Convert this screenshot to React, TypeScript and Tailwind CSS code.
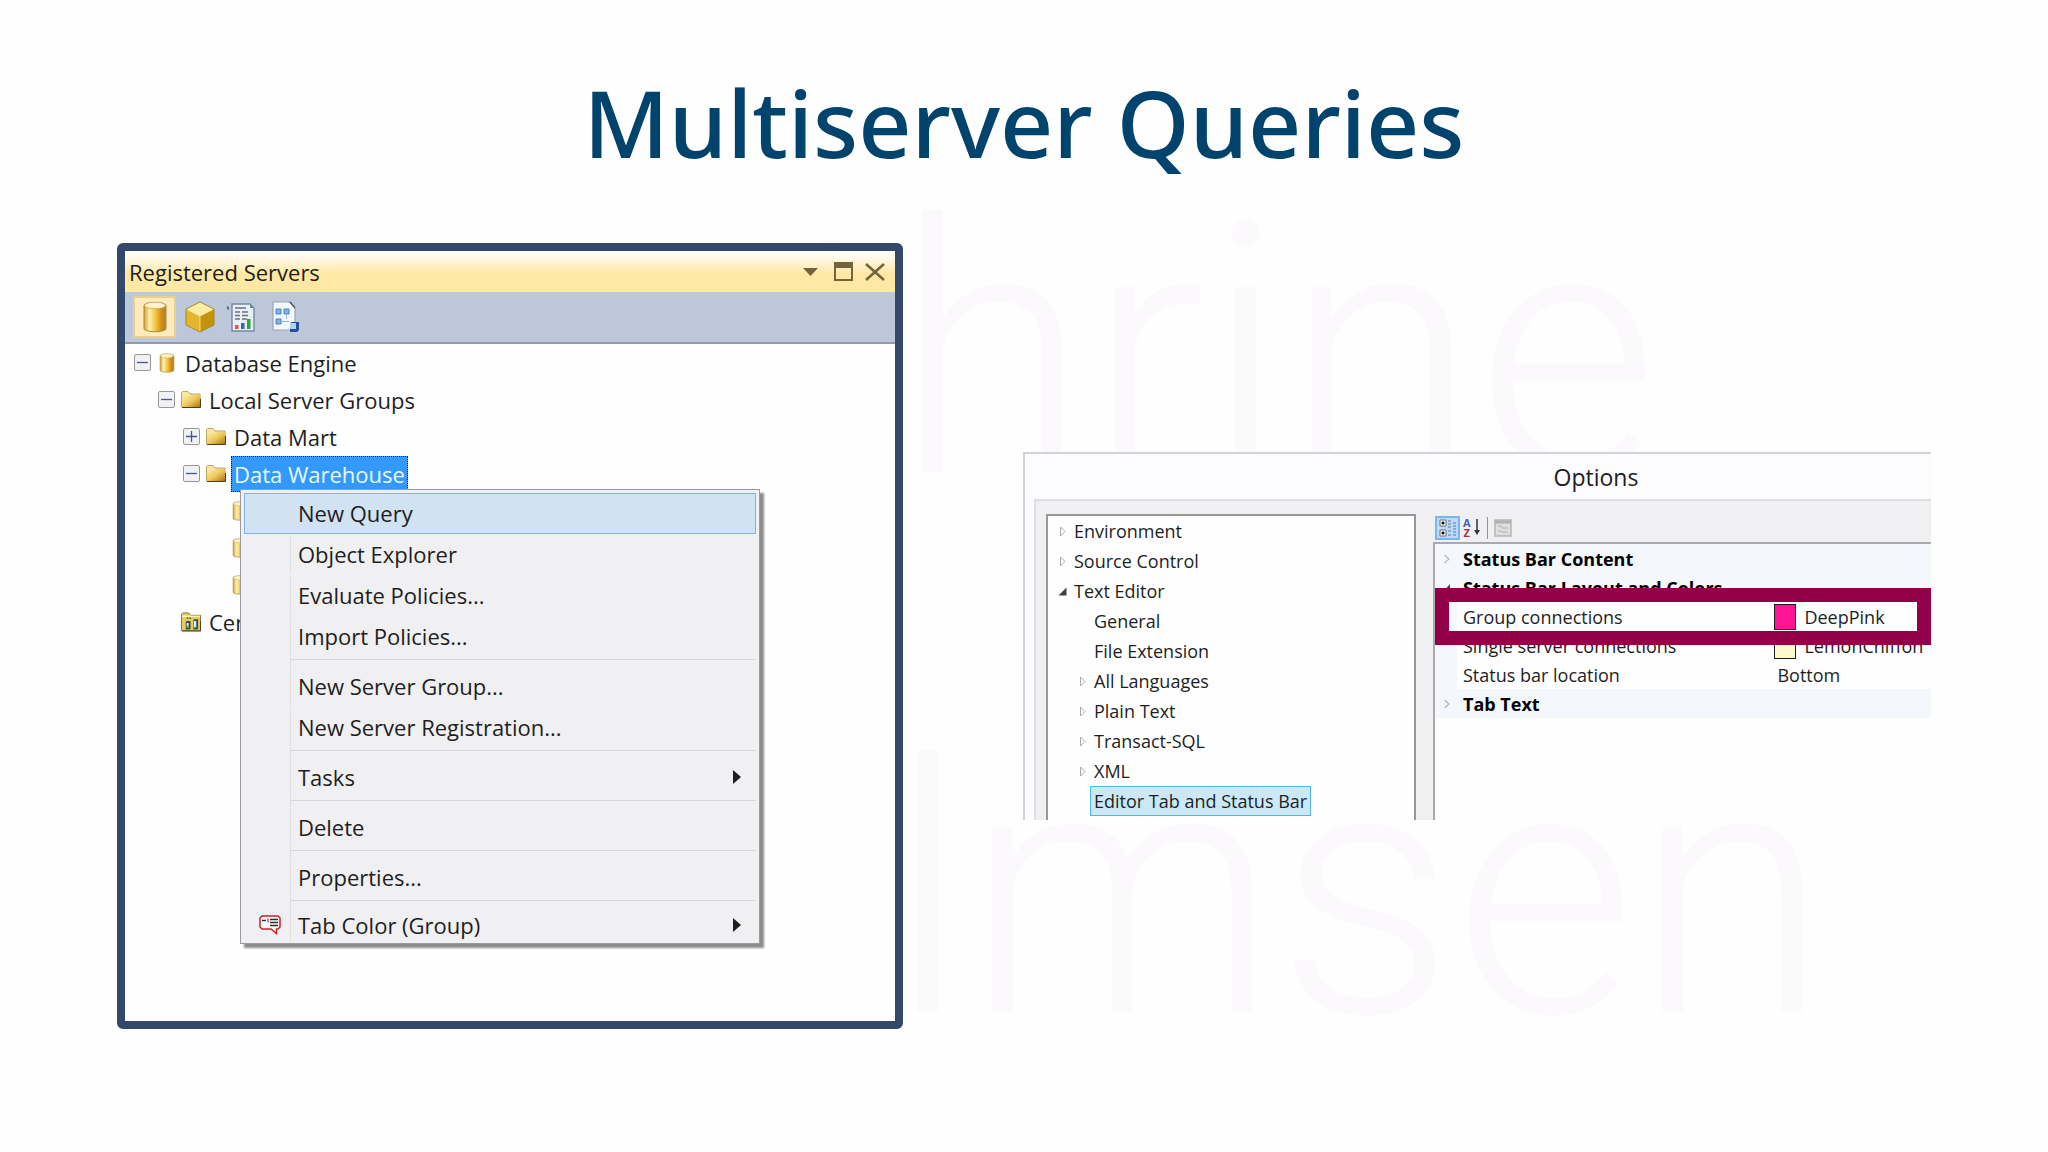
import type { ReactNode } from 'react'

type MenuEntry = { label: string; submenu?: boolean; icon?: ReactNode }

const INDENT = ['pl-[9px]', 'pl-[33px]', 'pl-[58px]', 'pl-[82px]']

const Cylinder = ({ className }: { className: string }) => (
  <svg viewBox="0 0 24 32" className={className} aria-hidden="true">
    <defs>
      <linearGradient id="cyl" x1="0" x2="1">
        <stop offset="0" stopColor="#d9a02a" />
        <stop offset="0.25" stopColor="#fff0b0" />
        <stop offset="0.55" stopColor="#f2c03c" />
        <stop offset="0.8" stopColor="#d58a10" />
        <stop offset="1" stopColor="#a9832f" />
      </linearGradient>
    </defs>
    <path d="M1 4.500C1 0.500 23 0.500 23 4.500V27.500C23 31.800 1 31.800 1 27.500Z" fill="url(#cyl)" stroke="#a78a4c" strokeWidth="1" />
    <ellipse cx="12" cy="4.500" rx="10.500" ry="3.300" fill="#fff3c9" stroke="#c9ab5a" strokeWidth="0.800" />
  </svg>
)

const Cube = () => (
  <svg viewBox="0 0 30 32" className="h-8 w-[30px]" aria-hidden="true">
    <path d="M15 1L29 8L15 15L1 8Z" fill="#fbeea3" />
    <path d="M1 8L15 15V31L1 24Z" fill="#e3b62c" />
    <path d="M29 8L15 15V31L29 24Z" fill="#c4930c" />
    <path d="M15 1L29 8V24L15 31L1 24V8Z" fill="none" stroke="#a98724" strokeWidth="1" />
    <path d="M2 8.500L15 15L28 8.500M15 15V30" fill="none" stroke="#fff2b0" strokeWidth="1" opacity="0.700" />
  </svg>
)

const Report = () => (
  <svg viewBox="0 0 30 32" className="h-8 w-[30px]" aria-hidden="true">
    <path d="M1 5l2 1v3l-2-1z" fill="#5b6b86" />
    <path d="M6 3H24L28 7V30H6Z" fill="#e9eff5" stroke="#7488a5" strokeWidth="1.400" />
    <path d="M24 3V7H28Z" fill="#6f84a3" />
    <path d="M9 7h11M9 11h5M16 11h6M9 14.500h5M16 14.500h6M9 18h5M16 18h5" stroke="#68747f" strokeWidth="1.500" />
    <path d="M9 24h3.500v4H9z" fill="#e8543c" />
    <path d="M15 22h3.500v6H15z" fill="#1c74c8" />
    <path d="M21 18h3.500v10H21z" fill="#35a532" />
  </svg>
)

const Integration = () => (
  <svg viewBox="0 0 30 32" className="h-8 w-[30px]" aria-hidden="true">
    <path d="M2 1H19L24 6V29H2Z" fill="#f3f8fd" stroke="#94a6bf" strokeWidth="1.200" />
    <path d="M18 1L24 8V6L20 1Z" fill="#4c5561" />
    <path d="M5 8h5v5H5zM13 8h5v5h-5zM5 18h5v5H5z" fill="#86b1e4" stroke="#4d83c4" strokeWidth="1" />
    <path d="M10 20.500h8M15.500 13v5" stroke="#9fb6d3" />
    <path d="M19 22l2-1h7v8l-2 2h-7z" fill="#244f9c" />
    <path d="M19 22h6v6h-6z" fill="#b5d2f4" />
  </svg>
)

const Folder = () => (
  <svg viewBox="0 0 20 17" className="h-[17px] w-5" aria-hidden="true">
    <defs>
      <linearGradient id="fold" x1="0" y1="0" x2="1" y2="1">
        <stop offset="0" stopColor="#fff0a8" />
        <stop offset="0.500" stopColor="#f0c75c" />
        <stop offset="1" stopColor="#a46f0d" />
      </linearGradient>
    </defs>
    <path d="M0.500 16V1.500L1.500 0.500H7L9 3H19V16Z" fill="#f7e7a2" stroke="#a89251" strokeWidth="0.800" />
    <path d="M1 5.500H8L10 4H19.500V16.500H1Z" fill="url(#fold)" />
    <path d="M19.500 8V16.500H1" fill="none" stroke="#4f3d14" />
  </svg>
)

const ServerFolder = () => (
  <svg viewBox="0 0 21 20" className="h-5 w-[21px]" aria-hidden="true">
    <path d="M0.500 19V2L2 0.500H8L10 3H20.500V19Z" fill="#e3cc62" stroke="#857132" />
    <path d="M1 4H20" stroke="#fff5b5" strokeWidth="1.500" />
    <path d="M5 10l1-1h4v8l-1 1H5zM13 8l1-1h4v10l-1 1h-4z" fill="#3c4b4c" />
    <path d="M6 11h2v5H6zM13.500 9h2.500v7h-2.500z" fill="#e9f3ee" />
    <path d="M6 14h2v2H6zM14 15h2v1.500h-2z" fill="#38b24a" />
    <path d="M6 6h1.500M9 6h1.500" stroke="#5d5430" strokeWidth="1.500" />
    <path d="M1 19.500H20.500V9" fill="none" stroke="#4d3f14" />
  </svg>
)

const TabColorIcon = () => (
  <svg viewBox="0 0 22 20" className="h-5 w-[22px]" aria-hidden="true">
    <path d="M3 1H19L21 3V12L19 14H17.500V18.500L12 14H3L1 12V3Z" fill="#fff" stroke="#c7202e" strokeWidth="1.500" />
    <path d="M3 5.500h4M11 4.500h8M11 7.500h8M11 10.500h8" stroke="#2c2c2c" strokeWidth="1.400" />
    <path d="M9 3.500v4" stroke="#c7202e" strokeWidth="1.200" />
  </svg>
)

const menu: MenuEntry[][] = [
  [{ label: 'New Query' }, { label: 'Object Explorer' }, { label: 'Evaluate Policies...' }, { label: 'Import Policies...' }],
  [{ label: 'New Server Group...' }, { label: 'New Server Registration...' }],
  [{ label: 'Tasks', submenu: true }],
  [{ label: 'Delete' }],
  [{ label: 'Properties...' }],
  [{ label: 'Tab Color (Group)', submenu: true, icon: <TabColorIcon /> }],
]

function ContextMenu() {
  return (
    <div
      role="menu"
      className="absolute left-[9px] top-full z-10 -mt-[3px] w-[520px] border border-[#9b9b9e] bg-[#f0eff1] p-[3px] pb-0 shadow-[4px_4px_2px_#8b8b8e]"
    >
      {menu.map((group, g) => (
        <div key={group[0].label} className="group/section">
          {g > 0 && (
            <div className="flex h-[9px]">
              <span className="w-[47px] border-r border-[#dcdcdf]" />
              <span className="mt-[2px] h-px flex-1 bg-[#d8d8db]" />
            </div>
          )}
          {group.map((item) => (
            <button
              key={item.label}
              type="button"
              role="menuitem"
              className={
                item.label === 'New Query'
                  ? 'flex h-[41px] w-full items-center border border-[#80b4ea] bg-[#d1e2f3] pr-3.5 text-left'
                  : 'flex h-[41px] w-full items-center border border-transparent pr-3.5 text-left group-last/section:h-9'
              }
            >
              <span className="flex h-full w-[46px] shrink-0 items-center justify-end border-r border-[#dcdcdf]/80 pr-[9px]">{item.icon}</span>
              <span className="flex-1 pl-[7px] text-[#1e1e1e]">{item.label}</span>
              {item.submenu && (
                <svg viewBox="0 0 8 14" className="h-3.5 w-2" aria-hidden="true">
                  <path d="M0 0L8 7L0 14Z" fill="#1e1e1e" />
                </svg>
              )}
            </button>
          ))}
        </div>
      ))}
    </div>
  )
}

function Toggle({ open }: { open: boolean }) {
  return (
    <button type="button" aria-label={open ? 'Collapse' : 'Expand'} className="h-[17px] w-[17px] shrink-0">
      <svg viewBox="0 0 17 17" className="h-full w-full" aria-hidden="true">
        <rect x="0.500" y="0.500" width="16" height="16" rx="1.500" fill="#f1f1f3" stroke="#98989b" />
        <path d={open ? 'M3 8.500H14' : 'M3 8.500H14M8.500 3V14'} stroke="#48569c" strokeWidth="1.300" />
      </svg>
    </button>
  )
}

function TreeRow({ level, open, icon, children }: { level: number; open?: boolean; icon: ReactNode; children?: ReactNode }) {
  return (
    <li className={`${INDENT[level]} flex h-[37px] items-center`}>
      {open === undefined ? <span className="w-[17px] shrink-0" /> : <Toggle open={open} />}
      <span className="ml-1.5 mr-2 flex w-5 shrink-0 justify-center">{icon}</span>
      {children}
    </li>
  )
}

function RegisteredServers() {
  return (
    <section className="flex min-h-[786px] flex-col rounded-md border-8 border-[#34496a] bg-[#fefefe] font-['Open_Sans','Noto_Sans',sans-serif] text-[22px] leading-[30px] text-[#1e1e1e]">
      <header className="flex h-[41px] items-center rounded-t-sm bg-linear-to-b from-[#fffcf5] from-10% to-[#ffe8a6] to-55% pl-1 pr-2.5">
        <h2 className="flex-1">Registered Servers</h2>
        <div className="flex items-center gap-4 text-[#75633a]">
          <button type="button" aria-label="Window position">
            <svg viewBox="0 0 15 8" className="h-2 w-[15px]">
              <path d="M0 0H15L7.500 8Z" fill="currentColor" />
            </svg>
          </button>
          <button type="button" aria-label="Maximize">
            <svg viewBox="0 0 19 19" className="h-[19px] w-[19px]">
              <path d="M1 1H18V18H1Z" fill="none" stroke="currentColor" strokeWidth="2" />
              <path d="M0 0H19V6H0Z" fill="currentColor" />
            </svg>
          </button>
          <button type="button" aria-label="Close" className="-ml-1">
            <svg viewBox="0 0 20 18" className="h-[18px] w-5">
              <path d="M1 1L19 17M19 1L1 17" fill="none" stroke="currentColor" strokeWidth="2.600" />
            </svg>
          </button>
        </div>
      </header>
      <div role="toolbar" className="flex h-[52px] items-center gap-[9px] border-b-2 border-[#8f9bb0] bg-[#bcc7da] pl-2">
        <button type="button" aria-label="Database Engine" className="flex h-[42px] w-[43px] items-center justify-center border-2 border-[#e8cf92] bg-[#fdebbd]">
          <Cylinder className="h-8 w-6" />
        </button>
        <button type="button" aria-label="Analysis Services"><Cube /></button>
        <button type="button" aria-label="Reporting Services" className="ml-0.5"><Report /></button>
        <button type="button" aria-label="Integration Services" className="ml-1.5"><Integration /></button>
      </div>
      <ul>
        <TreeRow level={0} open icon={<Cylinder className="h-5 w-4" />}>Database Engine</TreeRow>
        <TreeRow level={1} open icon={<Folder />}>Local Server Groups</TreeRow>
        <TreeRow level={2} open={false} icon={<Folder />}>Data Mart</TreeRow>
        <TreeRow level={2} open icon={<Folder />}>
          <div className="relative -ml-[3px]">
            <span className="block border border-dotted border-[#1e1e1e] bg-[#3399ff] px-0.5 py-[2px] text-[#e8faff]">Data Warehouse</span>
            <ContextMenu />
          </div>
        </TreeRow>
        <TreeRow level={3} icon={<Cylinder className="h-5 w-4" />} />
        <TreeRow level={3} icon={<Cylinder className="h-5 w-4" />} />
        <TreeRow level={3} icon={<Cylinder className="h-5 w-4" />} />
        <TreeRow level={1} icon={<ServerFolder />}>Central</TreeRow>
      </ul>
    </section>
  )
}

const optionTree = [
  { label: 'Environment', level: 0, state: 'closed' },
  { label: 'Source Control', level: 0, state: 'closed' },
  { label: 'Text Editor', level: 0, state: 'open' },
  { label: 'General', level: 1 },
  { label: 'File Extension', level: 1 },
  { label: 'All Languages', level: 1, state: 'closed' },
  { label: 'Plain Text', level: 1, state: 'closed' },
  { label: 'Transact-SQL', level: 1, state: 'closed' },
  { label: 'XML', level: 1, state: 'closed' },
  { label: 'Editor Tab and Status Bar', level: 1, selected: true },
]

function OptionTree() {
  return (
    <ul className="w-[370px] shrink-0 border-2 border-b-0 border-[#98989b] bg-[#fefefe]">
      {optionTree.map((node) => (
        <li key={node.label} className={node.level ? 'flex h-[30px] items-center pl-[30px]' : 'flex h-[30px] items-center pl-[10px]'}>
          <svg viewBox="0 0 9 11" className="h-[11px] w-[9px] shrink-0" aria-hidden="true">
            {node.state === 'closed' && <path d="M2.500 1L7 5.500L2.500 10Z" fill="#fff" stroke="#a9a9ab" />}
            {node.state === 'open' && <path d="M8.500 1.500V9.500H0.500Z" fill="#404040" />}
          </svg>
          <span className={node.selected ? 'ml-[3px] border border-[#55b5e6] bg-[#cbe8f6] px-[3px] leading-[28px]' : 'ml-[7px]'}>{node.label}</span>
        </li>
      ))}
    </ul>
  )
}

function Category({ name, open }: { name: string; open?: boolean }) {
  return (
    <tr className="h-[29px] bg-[#f4f7fc]">
      <td className="p-0">
        <svg viewBox="0 0 8 10" className="ml-2 h-2.5 w-2" aria-hidden="true">
          {open ? <path d="M7 1V9H0Z" fill="#404040" /> : <path d="M1.500 1L6 5L1.500 9" fill="none" stroke="#b9bbc0" strokeWidth="1.300" />}
        </svg>
      </td>
      <th scope="rowgroup" colSpan={2} className="p-0 pl-1.5 text-left font-bold text-black">{name}</th>
    </tr>
  )
}

function Property({ name, value, swatch, marked }: { name: string; value: string; swatch?: ReactNode; marked?: boolean }) {
  return (
    <tr className="relative h-[29px]">
      <td className="bg-[#f4f7fc] p-0">
        {marked && <span className="absolute -inset-y-[14px] inset-x-0 z-10 border-[14px] border-[#93004a]" />}
      </td>
      <th scope="row" className="p-0 pl-1.5 text-left font-normal">{name}</th>
      <td className="p-0">
        <span className={swatch ? 'flex items-center gap-2' : 'pl-[3px]'}>
          {swatch}
          {value}
        </span>
      </td>
    </tr>
  )
}

function Options() {
  return (
    <section className="flex h-[368px] flex-col overflow-hidden border-l-2 border-t-2 border-[#d3d3d6] bg-[#fcfbfe] font-['Open_Sans','Noto_Sans',sans-serif] text-[18px] leading-6 text-[#1e1e1e]">
      <h2 className="flex h-[45px] items-center justify-center pl-[236px] text-[23px]">Options</h2>
      <div className="ml-[9px] flex flex-1 border-l-2 border-t-2 border-[#dedee1] bg-[#f0eff2] pl-2.5 pt-[13px]">
        <OptionTree />
        <div className="ml-[17px] flex min-w-0 flex-1 flex-col">
          <div role="toolbar" className="flex h-7 items-start">
            <button type="button" aria-label="Categorized" className="ml-0.5 mt-0.5 flex h-6 w-[25px] items-center justify-center border-2 border-[#7cb4ec] bg-[#b9daf8]">
              <svg viewBox="0 0 20 20" className="h-5 w-5">
                <path d="M2 2h6v6H2zM2 12h6v6H2z" fill="#fff" stroke="#6e6e6e" />
                <path d="M3.500 5h3M5 3.500v3M3.500 15h3M5 13.500v3" stroke="#000" strokeWidth="1.500" />
                <path d="M10 3h3M10 6h3M10 9h3M10 13h3M10 17h3M15 5h3M15 8h3M15 11h3M15 14h3M15 17h3" stroke="#647b97" />
              </svg>
            </button>
            <button type="button" aria-label="Alphabetical" className="ml-[3px] mt-1 flex">
              <span className="flex flex-col text-[11px] font-bold leading-[10px]">
                <span className="text-[#4461b5]">A</span>
                <span className="text-[#a83245]">Z</span>
              </span>
              <svg viewBox="0 0 8 18" className="ml-0.5 h-[18px] w-2">
                <path d="M4 1V14" stroke="#333" strokeWidth="1.500" />
                <path d="M1 12H7L4 17Z" fill="#333" />
              </svg>
            </button>
            <span className="ml-1.5 mt-[3px] h-[22px] w-px bg-[#929295]" />
            <button type="button" aria-label="Property pages" className="ml-1.5 mt-[5px]" disabled>
              <svg viewBox="0 0 18 18" className="h-[18px] w-[18px]">
                <path d="M1 1H17V17H1Z" fill="#dededf" stroke="#b5b5b7" strokeWidth="1.500" />
                <path d="M1 3H17" stroke="#b0b0b2" strokeWidth="3" />
                <path d="M4 7h3l1 2h6M4 12h3l1 1h6" fill="none" stroke="#b0b0b2" />
              </svg>
            </button>
          </div>
          <div className="flex-1 border-l-2 border-t-2 border-[#aaaaad] bg-[#fefefe]">
            <table className="w-full table-fixed border-collapse">
              <colgroup>
                <col className="w-[22px]" />
                <col className="w-[64%]" />
                <col />
              </colgroup>
              <tbody>
                <Category name="Status Bar Content" />
                <Category name="Status Bar Layout and Colors" open />
                <Property
                  name="Group connections"
                  value="DeepPink"
                  marked
                  swatch={<span className="h-[26px] w-[22px] shrink-0 border border-[#1e1e1e] bg-[#ff1493]" />}
                />
                <Property
                  name="Single server connections"
                  value="LemonChiffon"
                  swatch={<span className="h-[26px] w-[22px] shrink-0 border border-[#1e1e1e] bg-[#fffacd]" />}
                />
                <Property name="Status bar location" value="Bottom" />
                <Category name="Tab Text" />
              </tbody>
            </table>
          </div>
        </div>
      </div>
    </section>
  )
}

export default function App() {
  return (
    <main className="relative isolate min-h-screen overflow-hidden bg-[#fefefe] px-[117px] pb-16 pt-[58px]">
      <div
        aria-hidden="true"
        className="absolute right-[220px] top-[82px] -z-10 text-right font-['Roboto',sans-serif] text-[350px] font-light leading-[540px] text-[#fbf9fc]"
      >
        <div className="pr-[170px]">thrine</div>
        <div>elmsen</div>
      </div>
      <h1 className="text-center font-['Noto_Sans',sans-serif] text-[93px] font-medium leading-[128px] text-[#00436c]">Multiserver Queries</h1>
      <div className="mt-[57px] grid grid-cols-[786fr_908fr] items-center gap-[120px]">
        <RegisteredServers />
        <Options />
      </div>
    </main>
  )
}
